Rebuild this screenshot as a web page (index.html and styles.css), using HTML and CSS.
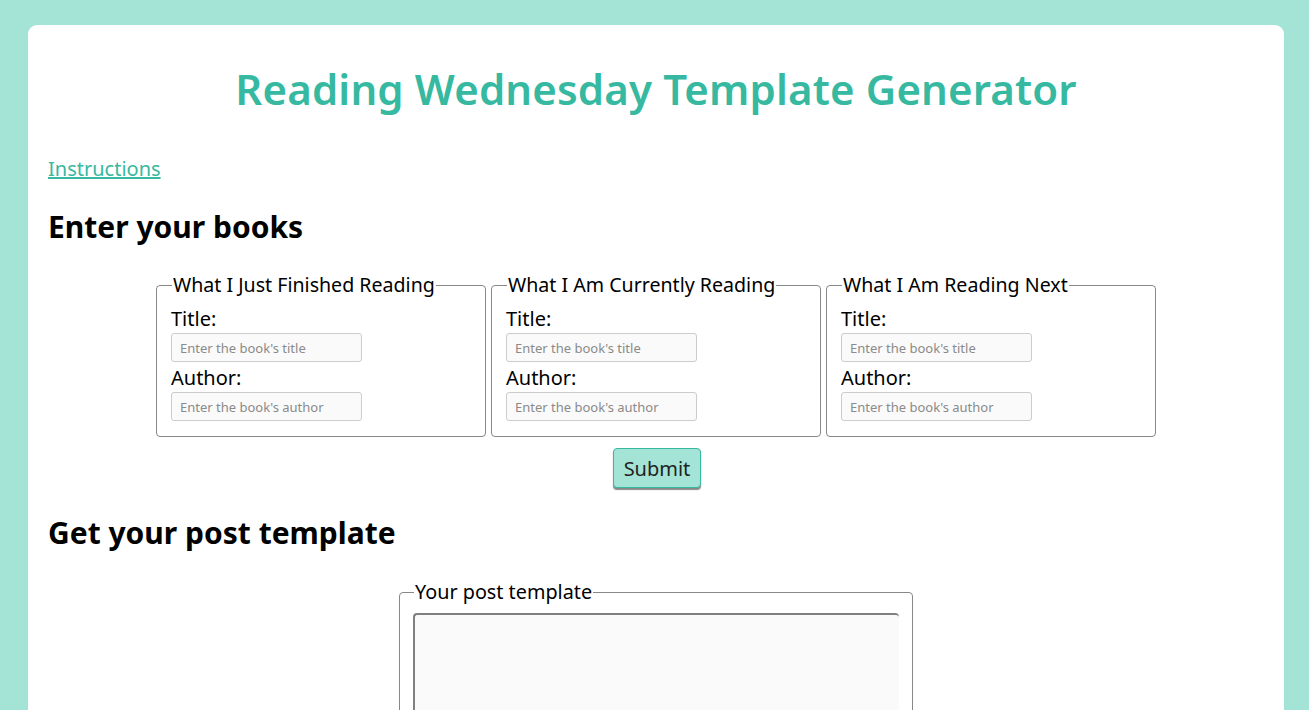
FILE: index.html
```html
<!DOCTYPE html>
<html lang="en">
<head>
<meta charset="utf-8">
<title>Reading Wednesday Template Generator</title>
<link rel="stylesheet" href="styles.css">
</head>
<body>
<main class="card">
  <h1 class="title">Reading Wednesday Template Generator</h1>
  <a class="link" href="#">Instructions</a>
  <h2 class="section">Enter your books</h2>
  <form class="books">
    <div class="row">
      <fieldset class="box">
        <legend>What I Just Finished Reading</legend>
        <label>Title:</label>
        <input type="text" placeholder="Enter the book's title">
        <label class="author">Author:</label>
        <input type="text" placeholder="Enter the book's author">
      </fieldset>
      <fieldset class="box">
        <legend>What I Am Currently Reading</legend>
        <label>Title:</label>
        <input type="text" placeholder="Enter the book's title">
        <label class="author">Author:</label>
        <input type="text" placeholder="Enter the book's author">
      </fieldset>
      <fieldset class="box">
        <legend>What I Am Reading Next</legend>
        <label>Title:</label>
        <input type="text" placeholder="Enter the book's title">
        <label class="author">Author:</label>
        <input type="text" placeholder="Enter the book's author">
      </fieldset>
    </div>
    <button type="button" class="submit">Submit</button>
  </form>
  <h2 class="section section2">Get your post template</h2>
  <div class="outwrap">
    <fieldset class="outbox">
      <legend>Your post template</legend>
      <textarea class="output"></textarea>
    </fieldset>
  </div>
</main>
</body>
</html>
```
FILE: styles.css
```css
html, body {
  margin: 0;
  padding: 0;
  background: #a4e4d6;
  font-family: "Noto Sans", "Open Sans", sans-serif;
  color: #000;
}
body {
  padding: 25px 25px 0 28px;
  height: 710px;
  box-sizing: border-box;
  overflow: hidden;
}
.card {
  background: #fff;
  border-radius: 9px;
  padding: 28px 20px 40px;
  min-height: 800px;
  box-sizing: border-box;
}
.title {
  margin: 0;
  text-align: center;
  color: #36b9a0;
  font-size: 42px;
  font-weight: 600;
  letter-spacing: 0.15px;
  line-height: 72px;
}
.link {
  display: inline-block;
  margin-top: 29px;
  color: #36b9a0;
  font-size: 20px;
  line-height: 30px;
}
.section {
  margin: 21px 0 0;
  font-size: 30px;
  font-weight: 700;
  line-height: 44px;
}
.books {
  margin-top: 23px;
  display: flex;
  flex-direction: column;
  align-items: center;
}
.row {
  display: flex;
  gap: 5px;
  justify-content: center;
}
.box {
  width: 330px;
  box-sizing: border-box;
  margin: 0;
  border: 1px solid #888;
  border-radius: 4px;
  padding: 0 14px 12px;
  display: flex;
  flex-direction: column;
  align-items: flex-start;
}
.box legend, .outbox legend {
  font-size: 19.6px;
  line-height: 26px;
  padding: 0 1px;
  margin-left: 1px;
}
.outbox legend { font-size: 19.8px; }
.box label {
  font-size: 20px;
  line-height: 24px;
  margin-top: 9px;
}
.box .author { margin-top: 1px; }
.box input {
  width: 191px;
  height: 29px;
  box-sizing: border-box;
  margin: 2px 0 3px;
  border: 1px solid #ccc;
  border-radius: 3px;
  background: #fafafa;
  padding: 0 8px;
  font-family: "Noto Sans", sans-serif;
  font-size: 13px;
}
.box input::placeholder { color: #8a8a8a; }
.submit {
  margin: 11px 0 0 2px;
  width: 88px;
  height: 40px;
  background: #a4e4d6;
  border: 1px solid #36b9a0;
  border-radius: 4px;
  box-shadow: 0 2px 1px #888;
  font-family: "Noto Sans", sans-serif;
  font-size: 20px;
  color: #222;
  padding: 0;
}
.section2 { margin-top: 23px; }
.outwrap {
  display: flex;
  justify-content: center;
  margin-top: 24px;
}
.outbox {
  width: 513px;
  box-sizing: border-box;
  margin: 0;
  border: 1px solid #888;
  border-radius: 4px;
  padding: 0 13px 15px;
}
.output {
  display: block;
  width: 486px;
  height: 200px;
  box-sizing: border-box;
  margin-top: 8px;
  border: 0;
  border-top: 2px solid #808080;
  border-left: 2px solid #808080;
  border-radius: 4px;
  background: #fafafa;
  resize: none;
}
```
